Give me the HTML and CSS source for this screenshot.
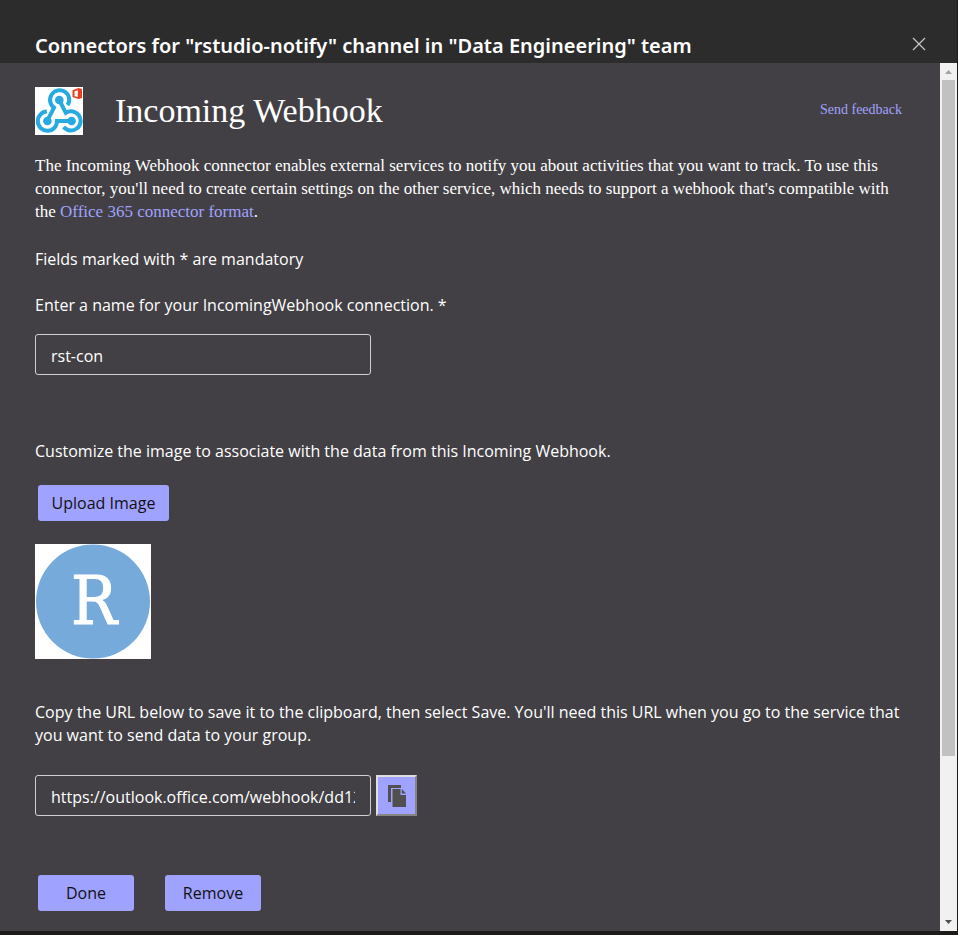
FILE: index.html
```html
<!DOCTYPE html>
<html lang="en">
<head>
<meta charset="utf-8">
<meta name="viewport" content="width=device-width, initial-scale=1">
<title>Connectors</title>
<link rel="stylesheet" href="styles.css">
</head>
<body>
<div class="dialog">
  <header class="dialog-header">
    <h1 class="dialog-title">Connectors for "rstudio-notify" channel in "Data Engineering" team</h1>
    <button class="close" type="button" aria-label="Close">
      <svg width="14" height="14" viewBox="0 0 14 14"><path d="M1 1l12 12M13 1L1 13" fill="none" stroke="#c8c8c8" stroke-width="1.2"/></svg>
    </button>
  </header>
  <div class="dialog-body">
    <main class="content">
      <div class="connector">
        <svg class="connector-logo" width="48" height="48" viewBox="0 0 48 48" aria-hidden="true">
          <rect width="48" height="48" fill="#fff"/>
          <g fill="none" stroke="#27a9e1" stroke-width="4">
            <path d="M32.600 18.200A9.600 9.600 0 1 0 19 20.600L12.600 33.200"/>
            <path d="M24.300 13L30.800 25.800A9.600 9.600 0 1 1 28.600 40"/>
            <path d="M11.800 24.600A9.600 9.600 0 1 0 22 34H36"/>
          </g>
          <g fill="#27a9e1"><circle cx="24.300" cy="13" r="4.300"/><circle cx="12.400" cy="34" r="4.300"/><circle cx="36.600" cy="34" r="4.300"/></g>
          <path d="M37.500 3.200L43.500 1l3.500 1v9l-3.500 1-6-2zM39.500 4.200V9.300l3.300.6V3.200z" fill="#e8401c" fill-rule="evenodd"/>
        </svg>
        <h2 class="connector-name">Incoming Webhook</h2>
        <a class="feedback" href="#">Send feedback</a>
      </div>
      <p class="intro">The Incoming Webhook connector enables external services to notify you about activities that you want to track. To use this connector, you'll need to create certain settings on the other service, which needs to support a webhook that's compatible with the <a href="#">Office 365 connector format</a>.</p>
      <p class="text">Fields marked with * are mandatory</p>
      <label class="text" for="name">Enter a name for your IncomingWebhook connection. *</label>
      <input class="field" id="name" type="text" value="rst-con">
      <p class="text section">Customize the image to associate with the data from this Incoming Webhook.</p>
      <button class="button upload" type="button">Upload Image</button>
      <svg class="avatar" width="116" height="115" viewBox="0 0 116 115" role="img" aria-label="RStudio">
        <rect width="116" height="115" fill="#fff"/>
        <circle cx="58" cy="57.500" r="57" fill="#75aadb"/>
        <text class="avatar-letter" x="59" y="80" text-anchor="middle">R</text>
      </svg>
      <label class="text copy-label" for="url">Copy the URL below to save it to the clipboard, then select Save. You'll need this URL when you go to the service that you want to send data to your group.</label>
      <div class="url-row">
        <input class="field" id="url" type="text" readonly value="https://outlook.office.com/webhook/dd12f6a0">
        <button class="copy" type="button" aria-label="Copy URL">
          <svg width="20" height="24" viewBox="0 0 20 24"><path d="M1 1h13v3H4v14H1z" fill="#505050"/><path d="M5.500 5h8v6H19v12H5.500zM14.800 5L19 9.600h-4.200z" fill="#505050"/></svg>
        </button>
      </div>
      <div class="actions">
        <button class="button" type="button">Done</button>
        <button class="button" type="button">Remove</button>
      </div>
    </main>
    <div class="scrollbar" aria-hidden="true">
      <svg class="arrow" width="17" height="17" viewBox="0 0 17 17"><path d="M5 11l3.500-4 3.500 4z" fill="#a3a3a3"/></svg>
      <div class="track"><div class="thumb"></div></div>
      <svg class="arrow" width="17" height="17" viewBox="0 0 17 17"><path d="M5 6l3.500 4L12 6z" fill="#505050"/></svg>
    </div>
  </div>
</div>
</body>
</html>
```
FILE: styles.css
```css
* {
  box-sizing: border-box;
}

body {
  margin: 0;
  background: #1c1b1a;
  color: #fff;
  font: 16px/23px "Open Sans", "Noto Sans", sans-serif;
}

.dialog {
  display: flex;
  flex-direction: column;
  min-height: 100vh;
  padding: 0 1px 4px 0;
}

.dialog-header {
  display: flex;
  align-items: center;
  justify-content: space-between;
  padding: 30px 31px 1px 35px;
  background: #2d2c2c;
}

.dialog-title {
  margin: 0;
  font: 600 20px/32px "Noto Sans", sans-serif;
}

.close {
  display: flex;
  padding: 0 0 4px;
  border: 0;
  background: none;
}

.dialog-body {
  display: flex;
  flex: 1;
}

.content {
  display: flex;
  flex: 1;
  flex-direction: column;
  align-items: flex-start;
  min-width: 0;
  padding: 24px 32px 20px 35px;
  background: #424044;
}

.connector {
  display: flex;
  align-items: center;
  align-self: stretch;
  gap: 32px;
}

.connector-name {
  flex: 1;
  margin: 0;
  font: 400 34px/48px "Liberation Serif", serif;
}

.feedback {
  margin-right: 6px;
  padding-bottom: 2px;
  font: 14px/20px "Liberation Serif", serif;
}

a {
  color: #a0a2ff;
  text-decoration: none;
}

.intro {
  margin: 19px 0 25px;
  font: 17px/23px "Liberation Serif", serif;
}

.text {
  margin: 0 0 23px;
}

label.text {
  margin-bottom: 17px;
}

.field {
  width: 336px;
  height: 41px;
  padding: 2px 15px 0;
  border: 1px solid #d0d0d0;
  border-radius: 3px;
  background: transparent;
  color: #fff;
  font: inherit;
}

.section {
  margin: 65px 0 22px;
}

.button {
  width: 96px;
  height: 36px;
  margin: 0 3px;
  padding: 0;
  border: 0;
  border-radius: 3px;
  background: #a0a2ff;
  color: #111;
  font: inherit;
}

.upload {
  width: 131px;
}

.avatar {
  margin: 23px 0 42px;
}

.avatar-letter {
  fill: #fff;
  stroke: #fff;
  stroke-width: 1px;
  font: 68px "DejaVu Serif Condensed", "DejaVu Serif", serif;
}

label.copy-label {
  margin-bottom: 28px;
}

.url-row {
  display: flex;
  gap: 5px;
}

.copy {
  display: flex;
  align-items: center;
  justify-content: center;
  width: 41px;
  height: 41px;
  padding: 0;
  border: 2px solid;
  border-color: #dedede #858585 #858585 #dedede;
  background: #a0a2ff;
}

.actions {
  display: flex;
  gap: 25px;
  margin-top: 59px;
}

.scrollbar {
  display: flex;
  flex-direction: column;
  width: 17px;
  background: #f1f1f1;
}

.arrow {
  display: block;
}

.track {
  flex: 1;
  padding: 0 2px;
}

.thumb {
  height: 81%;
  background: #c1c1c1;
}
```
